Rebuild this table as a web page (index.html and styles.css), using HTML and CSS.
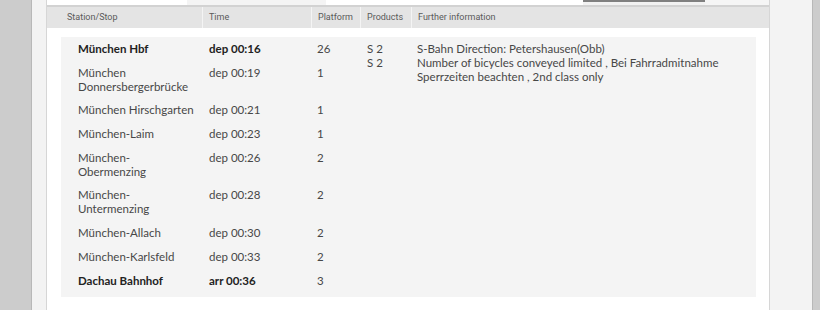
FILE: index.html
```html
<!DOCTYPE html>
<html>
<head>
<meta charset="utf-8">
<link rel="stylesheet" href="styles.css">
</head>
<body>
<div class="frame">
  <div class="panel">
    <div class="topstrip">
      <div class="ts-a"></div>
      <div class="ts-tab"></div>
      <div class="ts-b"></div>
      <div class="ts-btn"></div>
      <div class="ts-c"></div>
    </div>
    <div class="thead">
      <div class="th th-station">Station/Stop</div>
      <div class="th">Time</div>
      <div class="th">Platform</div>
      <div class="th">Products</div>
      <div class="th">Further information</div>
    </div>
    <div class="tbody">
      <div class="td st strong">München Hbf</div>
      <div class="td tm strong">dep 00:16</div>
      <div class="td pf">26</div>
      <div class="td prod span">S 2<br>S 2</div>
      <div class="td info span">S-Bahn Direction: Petershausen(Obb)<br>Number of bicycles conveyed limited , Bei Fahrradmitnahme Sperrzeiten beachten , 2nd class only</div>

      <div class="td st">München Donnersbergerbrücke</div>
      <div class="td tm">dep 00:19</div>
      <div class="td pf">1</div>

      <div class="td st">München Hirschgarten</div>
      <div class="td tm">dep 00:21</div>
      <div class="td pf">1</div>

      <div class="td st">München-Laim</div>
      <div class="td tm">dep 00:23</div>
      <div class="td pf">1</div>

      <div class="td st">München-Obermenzing</div>
      <div class="td tm">dep 00:26</div>
      <div class="td pf">2</div>

      <div class="td st">München-Untermenzing</div>
      <div class="td tm">dep 00:28</div>
      <div class="td pf">2</div>

      <div class="td st">München-Allach</div>
      <div class="td tm">dep 00:30</div>
      <div class="td pf">2</div>

      <div class="td st">München-Karlsfeld</div>
      <div class="td tm">dep 00:33</div>
      <div class="td pf">2</div>

      <div class="td st strong">Dachau Bahnhof</div>
      <div class="td tm strong">arr 00:36</div>
      <div class="td pf">3</div>
    </div>
  </div>
</div>
</body>
</html>
```

FILE: styles.css
```css
html, body {
  margin: 0;
  padding: 0;
  background: #cccccc;
  height: 310px;
  overflow: hidden;
}

.frame {
  margin-left: 31px;
  width: 752px;
  height: 310px;
  border-left: 1px solid #b8b8b8;
  border-right: 1px solid #b8b8b8;
  background: #f3f3f3;
  padding: 0 14px;
  box-sizing: content-box;
}

.panel {
  width: 722px;
  height: 310px;
  background: #ffffff;
  border-left: 1px solid #d6d6d6;
  border-right: 1px solid #d6d6d6;
}

.topstrip {
  display: flex;
  height: 5px;
  border-bottom: 2px solid #d2d2d2;
}
.ts-a { width: 140px; background: #ffffff; }
.ts-tab { width: 139px; background: #f4f4f4; }
.ts-b { width: 257px; background: #ffffff; }
.ts-btn {
  width: 122px;
  background: #f2f2f2;
  border-top: 2px solid #808080;
  box-sizing: border-box;
}
.ts-c { flex: 1; background: #f5f5f5; }

.thead {
  display: grid;
  grid-template-columns: 155px 109px 49px 51px 1fr;
  height: 21px;
  background: #e4e4e4;
  font-family: Roboto, "Liberation Sans", sans-serif;
  font-size: 9px;
  color: #5a5a5a;
}
.th {
  padding-left: 6px;
  line-height: 21px;
  border-left: 1px solid #f4f4f4;
}
.th:first-child {
  border-left: none;
  padding-left: 20px;
}

.tbody {
  display: grid;
  grid-template-columns: 141px 109px 49px 51px 1fr;
  margin: 9px 13px 0 14px;
  padding-bottom: 5px;
  background: #f4f4f4;
  font-family: Lato, "Noto Sans", sans-serif;
  font-size: 11.5px;
  line-height: 14px;
  color: #474747;
}
.td {
  padding: 5px 0 4.7px 6px;
}
.td.st {
  grid-column: 1;
  padding-left: 17px;
  padding-right: 6px;
}
.td.tm { grid-column: 2; padding-left: 7px; }
.td.pf { grid-column: 3; }
.td.prod { grid-column: 4; padding-left: 7px; }
.td.info { grid-column: 5; padding-right: 20px; }
.span { grid-row: 1 / 10; }
.strong {
  font-weight: bold;
  color: #222222;
}
```
